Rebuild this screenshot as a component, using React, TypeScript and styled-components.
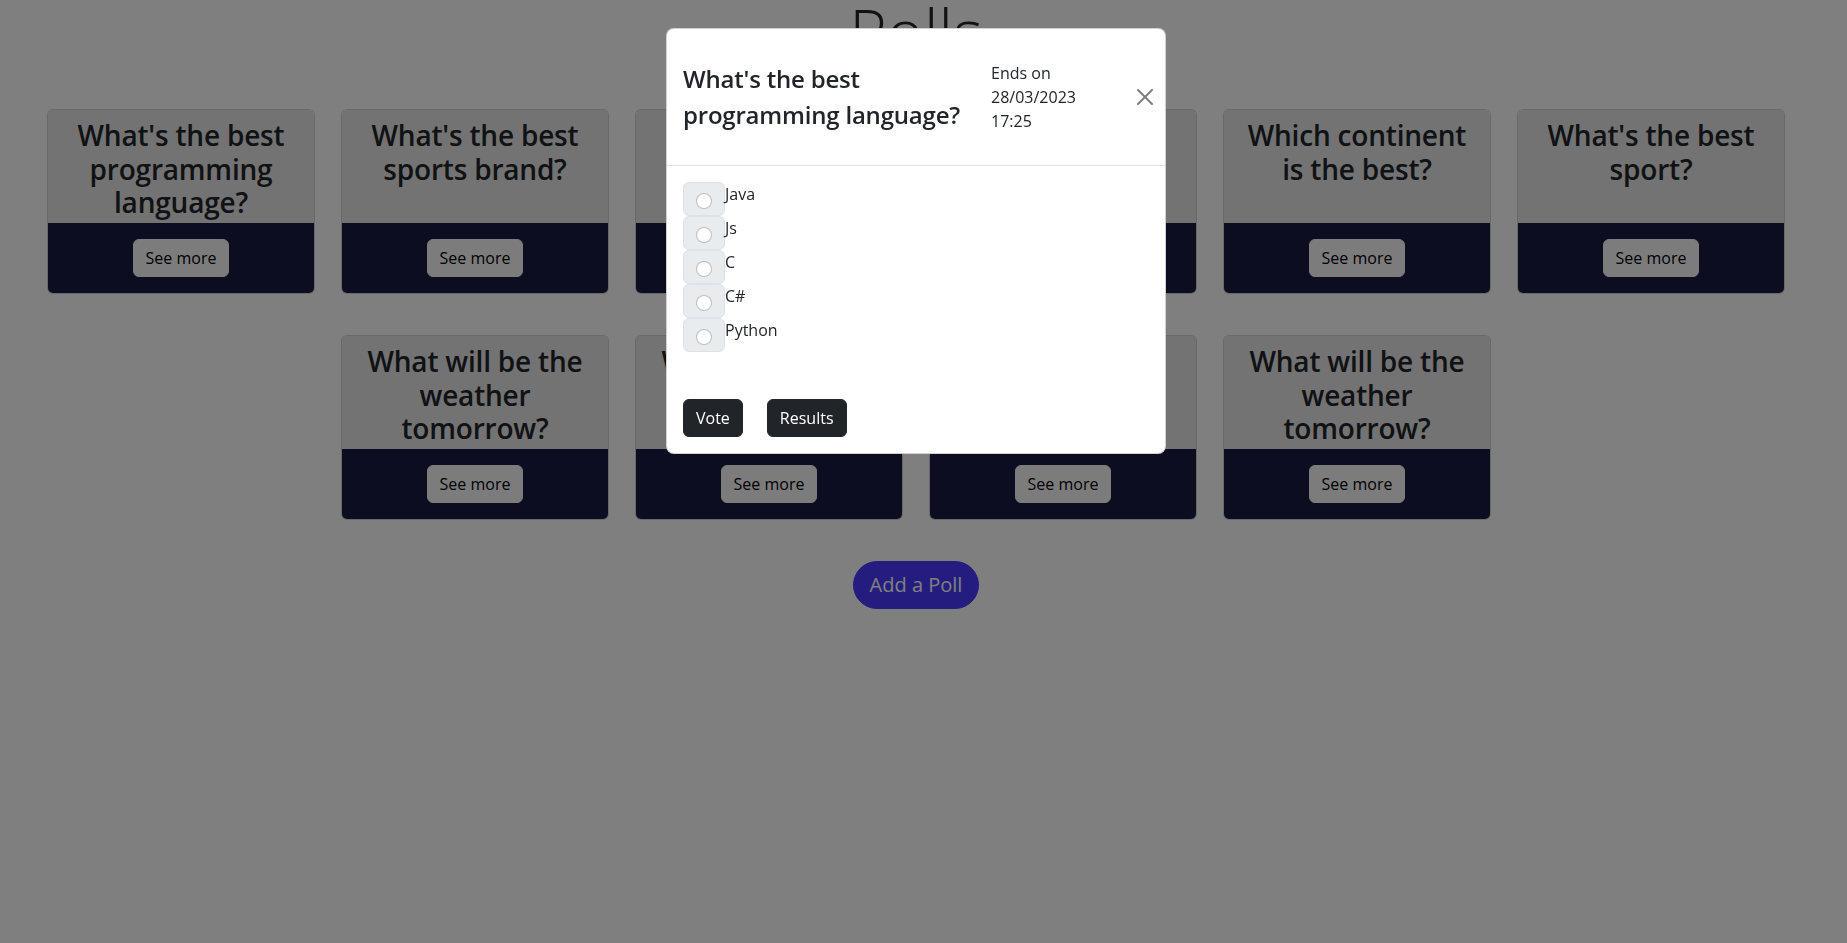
import React from "react";
import styled, { createGlobalStyle } from "styled-components";

const GlobalStyle = createGlobalStyle`
  html, body {
    margin: 0;
    padding: 0;
    background: #ffffff;
  }
  body {
    font-family: "Open Sans", "Noto Sans", sans-serif;
    color: #212529;
    font-size: 16px;
    line-height: 1.5;
  }
  * { box-sizing: border-box; }
`;

const Page = styled.div`
  display: flex;
  flex-direction: column;
  align-items: center;
  padding-right: 15px;
  min-height: 943px;
`;

const Heading = styled.h1`
  margin: 0;
  font-size: 64px;
  font-weight: 300;
  line-height: 1;
  color: #212529;
`;

const CardGrid = styled.div`
  display: flex;
  flex-wrap: wrap;
  justify-content: center;
  column-gap: 26px;
  row-gap: 41px;
  width: 1738px;
  margin-top: 45px;
`;

const Card = styled.div`
  width: 268px;
  display: flex;
  flex-direction: column;
  background: #ffffff;
  border: 1px solid rgba(0, 0, 0, 0.175);
  border-radius: 6px;
  overflow: hidden;
`;

const CardTop = styled.div`
  height: 113px;
  background: #e6e6e6;
  padding: 9px 16px 0;
  text-align: center;
`;

const CardTitle = styled.h3`
  margin: 0;
  font-size: 28px;
  font-weight: 600;
  line-height: 1.2;
  letter-spacing: -0.2px;
  color: #212529;
`;

const CardFooter = styled.div`
  height: 70px;
  background: #181a40;
  display: flex;
  align-items: center;
  justify-content: center;
`;

const LightButton = styled.button`
  font-family: inherit;
  font-size: 16px;
  line-height: 1.5;
  padding: 6px 12px;
  color: #000000;
  background: #f8f9fa;
  border: 1px solid #f8f9fa;
  border-radius: 6px;
`;

const AddButton = styled.button`
  margin-top: 41px;
  font-family: inherit;
  font-size: 20px;
  line-height: 1.5;
  padding: 8px 16px;
  color: #ffffff;
  background: #4a39fe;
  border: 1px solid #4a39fe;
  border-radius: 50rem;
`;

const Backdrop = styled.div`
  position: fixed;
  inset: 0;
  background: rgba(0, 0, 0, 0.5);
`;

const ModalLayer = styled.div`
  position: fixed;
  inset: 0;
  padding: 28px 15px 0 0;
  display: flex;
  justify-content: center;
  align-items: flex-start;
`;

const ModalBox = styled.div`
  width: 500px;
  background: #ffffff;
  border: 1px solid rgba(0, 0, 0, 0.175);
  border-radius: 8px;
  display: flex;
  flex-direction: column;
`;

const ModalHeader = styled.div`
  height: 137px;
  display: flex;
  align-items: center;
  padding: 0 16px;
  border-bottom: 1px solid #dee2e6;
`;

const ModalTitle = styled.h1`
  flex: 0 0 290px;
  margin: 0;
  font-size: 24px;
  font-weight: 600;
  line-height: 1.5;
  letter-spacing: -0.2px;
  color: #212529;
`;

const EndsOn = styled.div`
  margin-left: 18px;
  font-size: 16px;
  line-height: 24px;
  color: #212529;
`;

const CloseButton = styled.button`
  margin-left: auto;
  margin-right: -8px;
  width: 24px;
  height: 24px;
  padding: 4px;
  border: 0;
  background: transparent;
  opacity: 0.5;
  display: flex;
  align-items: center;
  justify-content: center;
`;

const ModalBody = styled.div`
  padding: 16px;
`;

const OptionList = styled.div`
  display: flex;
  flex-direction: column;
`;

const OptionRow = styled.div`
  display: flex;
  align-items: flex-start;
  height: 34px;
`;

const RadioBox = styled.div`
  width: 42px;
  height: 34px;
  padding: 10px 12px 0;
  background: #e9ecef;
  border: 1px solid #dee2e6;
  border-radius: 6px;
`;

const Radio = styled.input`
  appearance: none;
  display: block;
  margin: 0;
  width: 16px;
  height: 16px;
  border: 1px solid rgba(0, 0, 0, 0.25);
  border-radius: 50%;
  background: #ffffff;
`;

const OptionLabel = styled.label`
  font-size: 16px;
  line-height: 24px;
  color: #212529;
`;

const ButtonRow = styled.div`
  display: flex;
  gap: 24px;
  margin-top: 47px;
`;

const DarkButton = styled.button`
  font-family: inherit;
  font-size: 16px;
  line-height: 1.5;
  padding: 6px 12px;
  color: #ffffff;
  background: #212529;
  border: 1px solid #212529;
  border-radius: 6px;
`;

const polls = [
  "What's the best programming language?",
  "What's the best sports brand?",
  "Best movie?",
  "Best football club?",
  "Which continent is the best?",
  "What's the best sport?",
  "What will be the weather tomorrow?",
  "What will be the weather tomorrow?",
  "Best pizza?",
  "What will be the weather tomorrow?",
];

const options = ["Java", "Js", "C", "C#", "Python"];

const CloseIcon = () => (
  <svg width="16" height="16" viewBox="0 0 16 16" fill="#000">
    <path d="M.293.293a1 1 0 0 1 1.414 0L8 6.586 14.293.293a1 1 0 1 1 1.414 1.414L9.414 8l6.293 6.293a1 1 0 0 1-1.414 1.414L8 9.414l-6.293 6.293a1 1 0 0 1-1.414-1.414L6.586 8 .293 1.707a1 1 0 0 1 0-1.414z" />
  </svg>
);

export default function App() {
  return (
    <>
      <GlobalStyle />
      <Page>
        <Heading>Polls</Heading>
        <CardGrid>
          {polls.map((q, i) => (
            <Card key={i}>
              <CardTop>
                <CardTitle>{q}</CardTitle>
              </CardTop>
              <CardFooter>
                <LightButton>See more</LightButton>
              </CardFooter>
            </Card>
          ))}
        </CardGrid>
        <AddButton>Add a Poll</AddButton>
      </Page>
      <Backdrop />
      <ModalLayer>
        <ModalBox>
          <ModalHeader>
            <ModalTitle>What's the best programming language?</ModalTitle>
            <EndsOn>
              Ends on
              <br />
              28/03/2023
              <br />
              17:25
            </EndsOn>
            <CloseButton aria-label="Close">
              <CloseIcon />
            </CloseButton>
          </ModalHeader>
          <ModalBody>
            <OptionList>
              {options.map((o) => (
                <OptionRow key={o}>
                  <RadioBox>
                    <Radio type="radio" name="poll" id={`opt-${o}`} />
                  </RadioBox>
                  <OptionLabel htmlFor={`opt-${o}`}>{o}</OptionLabel>
                </OptionRow>
              ))}
            </OptionList>
            <ButtonRow>
              <DarkButton>Vote</DarkButton>
              <DarkButton>Results</DarkButton>
            </ButtonRow>
          </ModalBody>
        </ModalBox>
      </ModalLayer>
    </>
  );
}
